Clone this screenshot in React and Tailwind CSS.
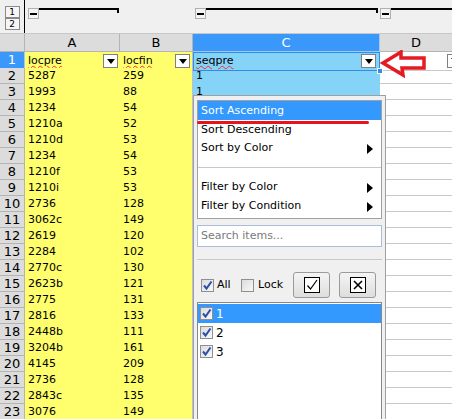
import React from "react";

const rows = [
  ["5287", "259", "1"],
  ["1993", "88", "1"],
  ["1234", "54"],
  ["1210a", "52"],
  ["1210d", "53"],
  ["1234", "54"],
  ["1210f", "53"],
  ["1210i", "53"],
  ["2736", "128"],
  ["3062c", "149"],
  ["2619", "120"],
  ["2284", "102"],
  ["2770c", "130"],
  ["2623b", "121"],
  ["2775", "131"],
  ["2816", "133"],
  ["2448b", "111"],
  ["3204b", "161"],
  ["4145", "209"],
  ["2736", "128"],
  ["2843c", "135"],
  ["3076", "149"],
];

const font = { fontFamily: '"DejaVu Sans", sans-serif' };

const DropBtn = () => (
  <div className="w-[15px] h-[14px] bg-white border border-[#808080] flex items-center justify-center shrink-0">
    <div className="w-0 h-0 border-l-[4px] border-r-[4px] border-t-[5px] border-l-transparent border-r-transparent border-t-black" />
  </div>
);

const Arrow = () => (
  <div className="w-0 h-0 border-t-[5px] border-b-[5px] border-l-[6px] border-t-transparent border-b-transparent border-l-black" />
);

const Check = ({ on = true }) => (
  <div className="w-[13px] h-[13px] border border-[#8f8f8f] bg-gradient-to-br from-[#dcdcdc] to-[#f8f8f8] flex items-center justify-center shrink-0">
    {on && (
      <svg width="11" height="11" viewBox="0 0 11 11">
        <path d="M2 5.5 L4.5 8.5 L9.5 1.5" fill="none" stroke="#2a4fa8" strokeWidth="2" />
      </svg>
    )}
  </div>
);

const Minus = () => (
  <div className="w-[11px] h-[11px] border border-[#b0b0b0] bg-[#f4f4f4] flex items-center justify-center mt-[8px] shrink-0">
    <div className="w-[7px] h-[2px] bg-black" />
  </div>
);

const Bracket = ({ w }) => (
  <div className="flex items-start">
    <Minus />
    <div className="h-[5px] border-t-2 border-r-2 border-black mt-[8px]" style={{ width: w }} />
  </div>
);

export default function App() {
  return (
    <div className="relative w-[452px] h-[419px] overflow-hidden bg-white text-[11px] text-black" style={font}>
      {/* outline area */}
      <div className="flex h-[34px] bg-[#f0f0f0] border-b border-[#c8c8c8]">
        <div className="w-[25px] border-r border-black flex flex-col items-center pt-[6px] shrink-0">
          <div className="w-[15px] h-[12px] border border-[#8a8a8a] bg-[#f6f6f6] text-[9px] leading-[10px] text-center">1</div>
          <div className="w-[15px] h-[12px] border border-[#8a8a8a] bg-[#f6f6f6] text-[9px] leading-[10px] text-center">2</div>
        </div>
        <div className="pl-[3px] w-[170px] shrink-0">
          <Bracket w={80} />
        </div>
        <div className="w-[185px] shrink-0">
          <Bracket w={172} />
        </div>
        <div className="flex items-start grow">
          <Minus />
          <div className="h-[5px] grow border-t-2 border-black mt-[8px]" />
        </div>
      </div>

      {/* column headers */}
      <div className="grid grid-cols-[25px_95px_73px_187px_1fr] h-[18px] text-[13px]">
        <div className="bg-[#dcdcdc] border-r border-b border-[#b4b4b4]" />
        <div className="bg-[#dcdcdc] border-r border-b border-[#b4b4b4] text-center leading-[17px]">A</div>
        <div className="bg-[#dcdcdc] border-r border-b border-[#b4b4b4] text-center leading-[17px]">B</div>
        <div className="bg-[#3a98fb] border-r border-b border-[#a4c8ef] text-center leading-[17px] text-white">C</div>
        <div className="bg-[#dcdcdc] border-b border-[#b4b4b4] text-center leading-[17px]">D</div>
      </div>

      {/* row 1 */}
      <div className="grid grid-cols-[25px_95px_73px_187px_1fr] h-[16px]">
        <div className="bg-[#3a98fb] text-white text-center text-[13px] leading-[16px] border-r border-[#a4c8ef]">1</div>
        <div className="bg-[#ffff6d] flex items-center justify-between pl-[3px] pr-[2px]">
          <span className="underline decoration-wavy decoration-red-500 decoration-1">locpre</span>
          <DropBtn />
        </div>
        <div className="bg-[#ffff6d] flex items-center justify-between pl-[3px] pr-[2px] border-r border-[#c0c0c0]">
          <span className="underline decoration-wavy decoration-red-500 decoration-1">locfin</span>
          <DropBtn />
        </div>
        <div className="relative bg-[#86d3f8] flex items-center justify-between pl-[2px] pr-[3px] border border-[#2f8de8]">
          <span className="underline decoration-wavy decoration-red-500 decoration-1">seqpre</span>
          <DropBtn />
          <div className="absolute -right-[4px] -bottom-[4px] w-[6px] h-[6px] bg-[#2f8de8] border border-white" />
        </div>
        <div className="flex items-center justify-end border-b border-[#c8c8c8] overflow-hidden">
          <div className="-mr-[10px]"><DropBtn /></div>
        </div>
      </div>

      {/* data rows */}
      {rows.map((r, i) => (
        <div key={i} className="grid grid-cols-[25px_95px_73px_187px_1fr] h-[16px]">
          <div className="bg-[#dcdcdc] text-center text-[13px] leading-[15px] border-r border-b border-[#b4b4b4]">{i + 2}</div>
          <div className="bg-[#ffff6d] pl-[3px] leading-[16px]">{r[0]}</div>
          <div className="bg-[#ffff6d] pl-[3px] leading-[16px] border-r border-[#c0c0c0]">{r[1]}</div>
          <div className="bg-[#86d3f8] pl-[3px] leading-[16px]">{r[2] || ""}</div>
          <div className="border-b border-[#c8c8c8]" />
        </div>
      ))}

      {/* red arrow annotation */}
      <svg className="absolute left-[379px] top-[50px]" width="50" height="28" viewBox="0 0 50 28">
        <path d="M4 13 L22 2 L22 8 L45 8 L45 18 L23 18 L24 25 Z" fill="none" stroke="#e41b22" strokeWidth="3.5" strokeLinejoin="miter" />
      </svg>

      {/* filter popup */}
      <div className="absolute left-[193px] top-[95px] w-[193px] h-[330px] bg-[#f0f0f0] border border-[#a0a0a0] px-[3px] pt-[4px]">
        <div className="bg-white border border-[#a0a0a0] flex flex-col">
          <div className="h-[19px] bg-[#3399ff] text-white leading-[19px] pl-[3px]">Sort Ascending</div>
          <div className="h-[19px] leading-[19px] pl-[3px]">Sort Descending</div>
          <div className="h-[19px] flex items-center justify-between pl-[3px] pr-[8px]">
            <span>Sort by Color</span>
            <Arrow />
          </div>
          <div className="h-[10px] border-b border-[#c8c8c8]" />
          <div className="h-[10px]" />
          <div className="h-[19px] flex items-center justify-between pl-[3px] pr-[8px]">
            <span>Filter by Color</span>
            <Arrow />
          </div>
          <div className="h-[19px] flex items-center justify-between pl-[3px] pr-[8px]">
            <span>Filter by Condition</span>
            <Arrow />
          </div>
          <div className="h-[2px]" />
        </div>

        <div className="mt-[6px] h-[22px] bg-white border border-[#a9bcd9] pl-[3px] leading-[20px] text-[#7a7a7a]">Search items...</div>

        <div className="mt-[12px] border-t border-[#c8c8c8]" />

        <div className="mt-[12px] flex items-center h-[26px]">
          <div className="flex items-center gap-[3px] pl-[4px] w-[44px]">
            <Check />
            <span>All</span>
          </div>
          <div className="flex items-center gap-[4px] w-[52px]">
            <Check on={false} />
            <span>Lock</span>
          </div>
          <div className="w-[37px] h-[26px] rounded-[3px] border border-[#9a9a9a] bg-gradient-to-b from-[#f4f4f4] to-[#dedede] flex items-center justify-center">
            <div className="w-[16px] h-[16px] bg-white border border-black flex items-center justify-center">
              <svg width="12" height="12" viewBox="0 0 12 12">
                <path d="M1.5 6.5 L4.5 10 L11 1" fill="none" stroke="black" strokeWidth="1.2" />
              </svg>
            </div>
          </div>
          <div className="ml-[9px] w-[37px] h-[26px] rounded-[3px] border border-[#9a9a9a] bg-gradient-to-b from-[#f4f4f4] to-[#dedede] flex items-center justify-center">
            <div className="w-[16px] h-[16px] bg-white border border-black flex items-center justify-center">
              <svg width="10" height="10" viewBox="0 0 10 10">
                <path d="M1 1 L9 9 M9 1 L1 9" fill="none" stroke="black" strokeWidth="1.6" />
              </svg>
            </div>
          </div>
        </div>

        <div className="mt-[4px] h-[130px] bg-white border border-[#828790] flex flex-col pt-[1px]">
          <div className="h-[19px] bg-[#3399ff] text-white flex items-center gap-[3px] pl-[2px] text-[12px]">
            <Check />
            <span>1</span>
          </div>
          <div className="h-[19px] flex items-center gap-[3px] pl-[2px] text-[12px]">
            <Check />
            <span>2</span>
          </div>
          <div className="h-[19px] flex items-center gap-[3px] pl-[2px] text-[12px]">
            <Check />
            <span>3</span>
          </div>
        </div>
      </div>

      {/* red underline annotation */}
      <div className="absolute left-[197px] top-[121px] w-[172px] h-[3px] rounded-full bg-[#e8141c]" />
    </div>
  );
}
